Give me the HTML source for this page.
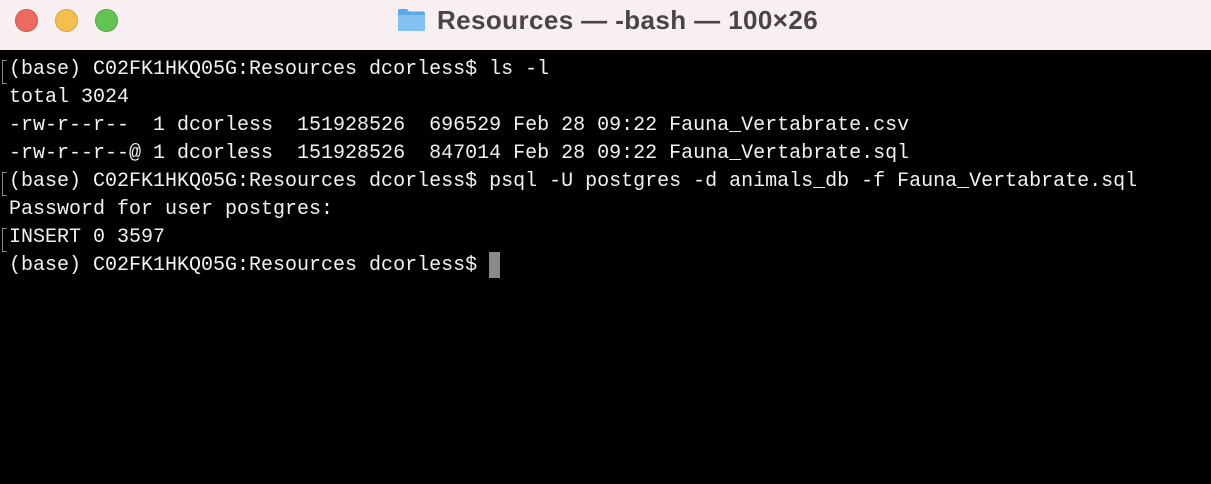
<!DOCTYPE html>
<html><head><style>
body{margin:0;width:1211px;height:484px;background:#000;overflow:hidden;position:relative}
.bar{position:absolute;left:0;top:0;width:1211px;height:50px;background:#f7eff0}
.dot{position:absolute;top:9px;width:23px;height:23px;border-radius:50%}
.title{position:absolute;left:437px;top:5px;font:bold 26px "Liberation Sans",sans-serif;letter-spacing:0.4px;color:#4a4445;white-space:nowrap}
.folder{position:absolute;left:397px;top:8px;width:29px;height:24px}
pre{position:absolute;left:9px;top:56px;margin:0;font:20px/28px "Liberation Mono",monospace;color:#f2f2f2}
.mk{position:absolute;left:2px;width:4px;height:22px;border-left:1px solid #888;border-top:1px solid #888;border-bottom:1px solid #888}
.cur{position:absolute;left:489px;top:252px;width:11px;height:26px;background:#8a8a8a}
</style></head><body>
<div class="bar">
<div class="dot" style="left:15px;background:#ed6a5e;border:1px solid #d65349;box-sizing:border-box"></div>
<div class="dot" style="left:55px;background:#f5bf4f;border:1px solid #d9a33e;box-sizing:border-box"></div>
<div class="dot" style="left:95px;background:#61c554;border:1px solid #4ea844;box-sizing:border-box"></div>
<svg class="folder" viewBox="0 0 29 24"><path d="M1 3 Q1 1 3 1 H10 L12 3.5 H26 Q28 3.5 28 5.5 V21 Q28 23 26 23 H3 Q1 23 1 21 Z" fill="#5aa8e6"/><path d="M1 7 H28 V21 Q28 23 26 23 H3 Q1 23 1 21 Z" fill="#82c1f2"/></svg>
<div class="title">Resources — -bash — 100×26</div>
</div>
<div class="mk" style="top:60px"></div>
<div class="mk" style="top:172px"></div>
<div class="mk" style="top:228px"></div>
<pre>(base) C02FK1HKQ05G:Resources dcorless$ ls -l
total 3024
-rw-r--r--  1 dcorless  151928526  696529 Feb 28 09:22 Fauna_Vertabrate.csv
-rw-r--r--@ 1 dcorless  151928526  847014 Feb 28 09:22 Fauna_Vertabrate.sql
(base) C02FK1HKQ05G:Resources dcorless$ psql -U postgres -d animals_db -f Fauna_Vertabrate.sql
Password for user postgres:
INSERT 0 3597
(base) C02FK1HKQ05G:Resources dcorless$ </pre>
<div class="cur"></div>
</body></html>
